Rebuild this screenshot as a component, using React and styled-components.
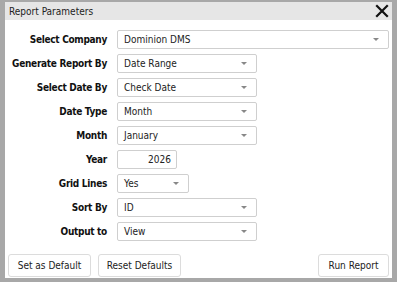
import styled, { createGlobalStyle } from "styled-components";

const GlobalStyle = createGlobalStyle`
    html, body {
        margin: 0;
        padding: 0;
        background: #a8a8a8;
    }
    body {
        font-family: "DejaVu Sans Condensed", "DejaVu Sans", sans-serif;
    }
`

const fields = [
    { label: "Select Company", value: "Dominion DMS", width: 272 },
    { label: "Generate Report By", value: "Date Range", width: 140 },
    { label: "Select Date By", value: "Check Date", width: 140 },
    { label: "Date Type", value: "Month", width: 140 },
    { label: "Month", value: "January", width: 140 },
    { label: "Year", value: "2026", width: 60, text: true },
    { label: "Grid Lines", value: "Yes", width: 72 },
    { label: "Sort By", value: "ID", width: 140 },
    { label: "Output to", value: "View", width: 140 },
];

export default function App() {
    return (
        <Frame>
            <GlobalStyle />
            <Dialog>
                <TitleBar>
                    <span>Report Parameters</span>
                    <CloseButton aria-label="close">
                        <svg width="14" height="14" viewBox="0 0 14 14">
                            <path d="M2 2 L12 12 M12 2 L2 12" stroke="#111" strokeWidth="2.2" strokeLinecap="square" />
                        </svg>
                    </CloseButton>
                </TitleBar>
                <Form>
                    {fields.map((field) => (
                        <Row key={field.label}>
                            <Label>{field.label}</Label>
                            {field.text ? (
                                <TextBox $width={field.width}>{field.value}</TextBox>
                            ) : (
                                <Select $width={field.width}>
                                    <span>{field.value}</span>
                                    <Caret />
                                </Select>
                            )}
                        </Row>
                    ))}
                </Form>
                <Footer>
                    <Button $width={83}>Set as Default</Button>
                    <Button $width={83}>Reset Defaults</Button>
                    <Spacer />
                    <Button $width={71}>Run Report</Button>
                </Footer>
            </Dialog>
        </Frame>
    )
}

const Frame = styled.div `
    width: 397px;
    height: 282px;
    box-sizing: border-box;
    padding: 2px 5px 4px 5px;
`

const Dialog = styled.div `
    display: flex;
    flex-direction: column;
    height: 100%;
    background: #ffffff;
`

const TitleBar = styled.div `
    display: flex;
    justify-content: space-between;
    align-items: center;
    height: 18px;
    padding: 0 3px 0 4px;
    background: #e6e6e6;
    font-size: 10px;
    color: #222;
`

const CloseButton = styled.div `
    display: flex;
    align-items: center;
    width: 14px;
    height: 14px;
`

const Form = styled.div `
    display: flex;
    flex-direction: column;
    gap: 5px;
    padding-top: 10px;
`

const Row = styled.div `
    display: grid;
    grid-template-columns: 102px auto;
    column-gap: 10px;
    align-items: center;
    height: 19px;
`

const Label = styled.div `
    text-align: right;
    font-weight: bold;
    font-size: 10px;
    letter-spacing: -0.3px;
    color: #111;
    white-space: nowrap;
`

const Select = styled.div `
    display: flex;
    justify-content: space-between;
    align-items: center;
    box-sizing: border-box;
    width: ${(props) => props.$width}px;
    height: 19px;
    padding: 0 9px 0 6px;
    border: 1px solid #cfcfcf;
    border-radius: 2px;
    font-size: 10px;
    color: #222;
`

const Caret = styled.div `
    width: 0;
    height: 0;
    border-left: 3px solid transparent;
    border-right: 3px solid transparent;
    border-top: 3px solid #888;
`

const TextBox = styled.div `
    box-sizing: border-box;
    width: ${(props) => props.$width}px;
    height: 19px;
    padding: 0 5px;
    line-height: 17px;
    text-align: right;
    border: 1px solid #cfcfcf;
    border-radius: 2px;
    font-size: 10px;
    color: #222;
`

const Footer = styled.div `
    display: flex;
    gap: 7px;
    margin-top: auto;
    padding: 0 3px 1px 3px;
`

const Spacer = styled.div `
    flex: 1;
`

const Button = styled.div `
    display: flex;
    align-items: center;
    justify-content: center;
    box-sizing: border-box;
    width: ${(props) => props.$width}px;
    height: 23px;
    border: 1px solid #dcdcdc;
    border-radius: 3px;
    font-size: 10px;
    color: #222;
`
